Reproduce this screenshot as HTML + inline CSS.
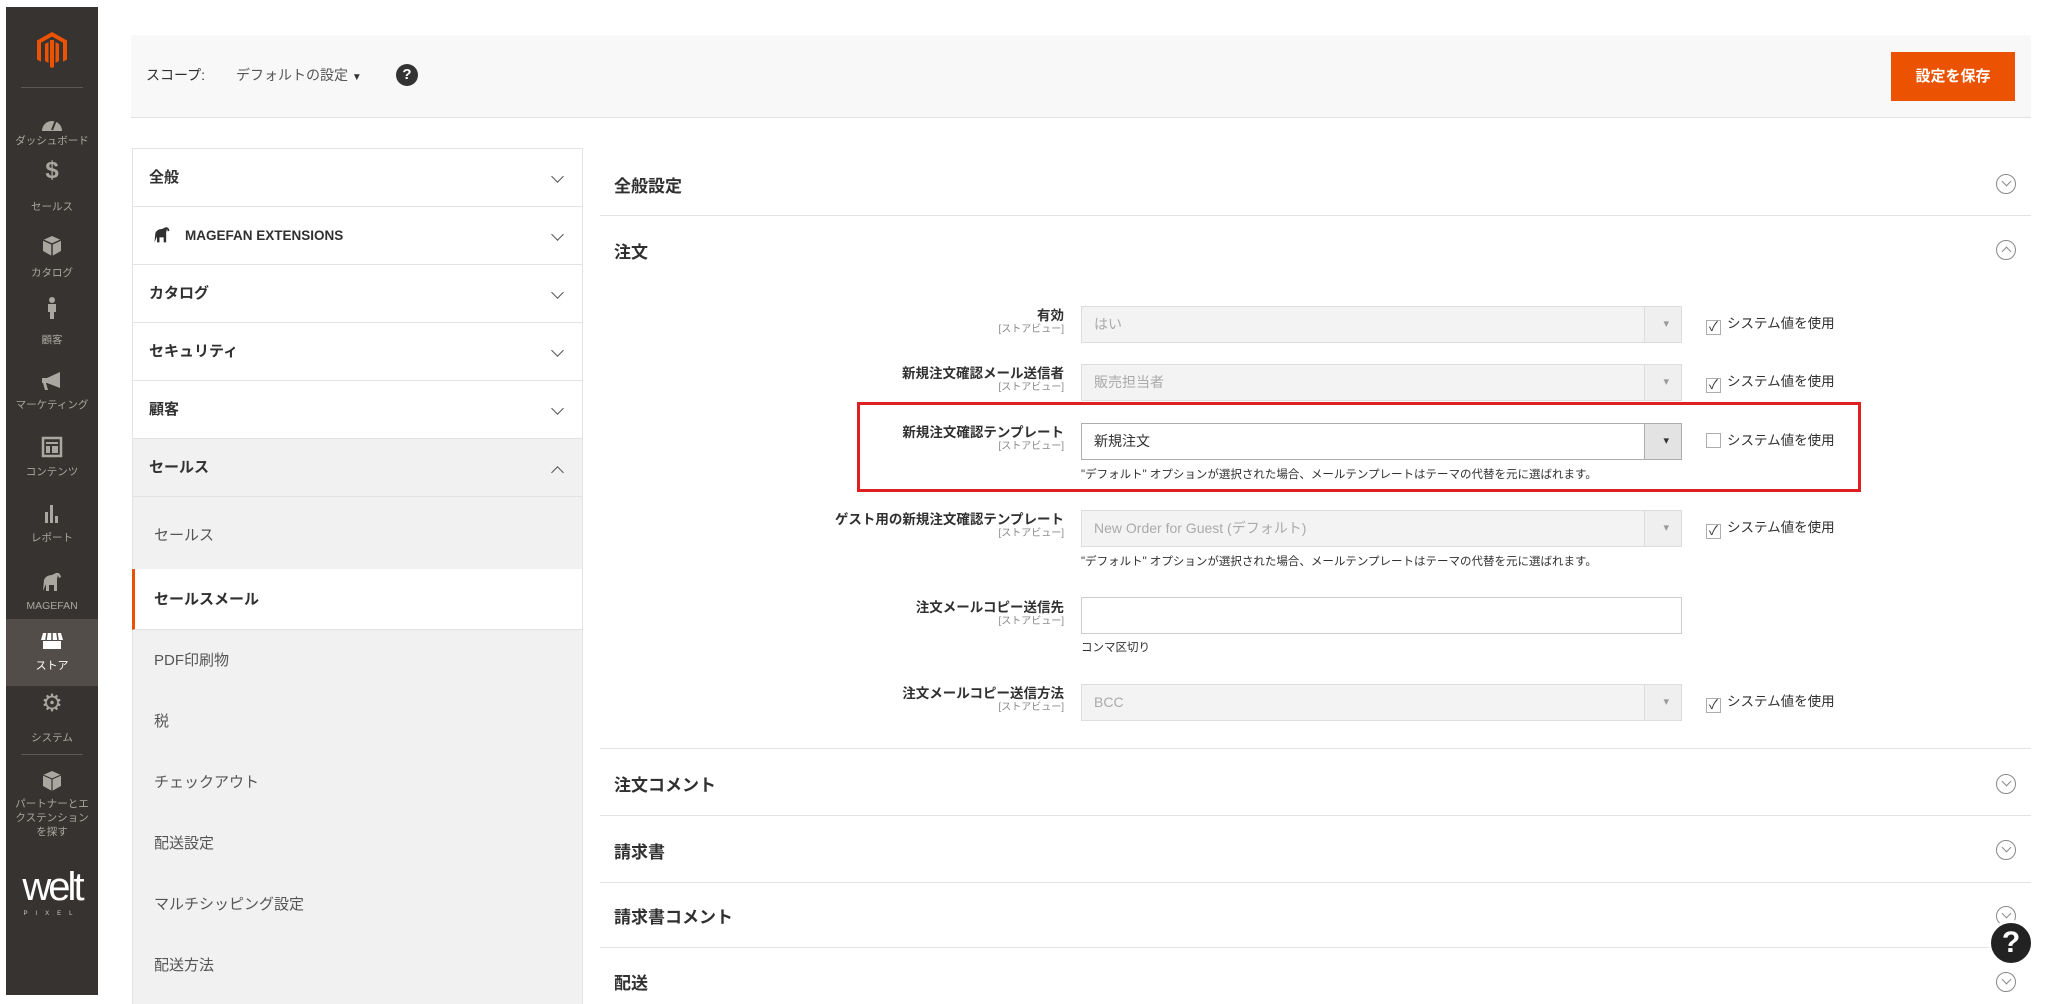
<!DOCTYPE html>
<html><head><meta charset="utf-8"><style>
*{margin:0;padding:0;box-sizing:border-box}
body{width:2048px;height:1004px;background:#fff;position:relative;overflow:hidden;font-family:"Liberation Sans","Noto Sans CJK JP",sans-serif;color:#303030}
.a{position:absolute}
#sb{left:6px;top:7px;width:92px;height:988px;background:#373330}
.si{position:absolute;left:0;width:92px;text-align:center;color:#aaa6a0;font-size:10.5px;line-height:14px}
.ic{position:absolute;left:34px;width:24px;height:24px}
.hdr{left:131px;top:35px;width:1900px;height:83px;background:#f8f8f8;border-bottom:1px solid #e3e3e3}
.row{position:absolute;left:132px;width:451px;height:58px;border:1px solid #e3e3e3;border-top:none;font-size:15px;font-weight:bold;padding-left:16px;line-height:57px;background:#fff}
.chev{position:absolute;right:20px;top:23px;width:9px;height:9px;border-right:1.5px solid #555;border-bottom:1.5px solid #555;transform:rotate(45deg)}
.sub{position:absolute;left:132px;width:451px;height:61px;background:#f1f1f1;border-right:1px solid #e3e3e3;border-left:1px solid #e3e3e3;font-size:15px;color:#555;padding-left:21px;line-height:61px}
.sec{position:absolute;left:614px;font-size:17px;font-weight:bold;color:#303030}
.line{position:absolute;left:600px;width:1431px;height:1px;background:#e3e3e3}
.circ{position:absolute;left:1996px;width:20px;height:20px;border:1.5px solid #888;border-radius:50%}
.circ:after{content:"";position:absolute;left:5.5px;top:3px;width:6px;height:6px;border-right:1.5px solid #888;border-bottom:1.5px solid #888;transform:rotate(45deg)}
.circ.up:after{top:7px;transform:rotate(-135deg)}
.lbl{position:absolute;right:984px;text-align:right;font-size:13.5px;font-weight:bold;line-height:16px}
.lbl small{display:block;font-weight:normal;font-size:10px;color:#888;line-height:12px}
.sel{position:absolute;left:1081px;width:601px;height:37px;border:1px solid #ddd;background:#f3f3f3;color:#aaa;font-size:14px;line-height:35px;padding-left:12px}
.sel:after{content:"";position:absolute;right:0;top:0;width:36px;height:35px;border-left:1px solid #ddd;background:#efefef}
.sel:before{content:"▾";position:absolute;right:12px;top:0;font-size:11px;color:#999;z-index:1}
.sel.on{background:#fff;border-color:#adadad;color:#303030}
.sel.on:after{background:#e3e3e3;border-color:#adadad}
.sel.on:before{color:#333}
.inp{position:absolute;left:1081px;width:601px;height:37px;border:1px solid #ccc;background:#fff}
.cb{position:absolute;left:1706px;font-size:13.5px;color:#303030;line-height:16px}
.cb i{display:inline-block;width:15px;height:15px;border:1px solid #adadad;vertical-align:-3px;margin-right:6px;font-style:normal;font-size:13px;line-height:12px;text-align:center}
.note{position:absolute;left:1081px;font-size:11.5px;color:#303030}
</style></head><body>
<div id="sb" class="a">
 <svg class="a" style="left:30px;top:24px" width="32" height="38" viewBox="0 0 32 38"><path d="M16 1 L31 9.5 V28.5 L27 30.8 V11.8 L16 5.5 L5 11.8 V30.8 L1 28.5 V9.5 Z M14 9 L18 9 L18 36 L16 37 L14 36 Z M9 13 L12.5 11 V32 L9 30 Z M19.5 11 L23 13 V30 L19.5 32 Z" fill="#eb5202"/></svg>
 <div class="a" style="left:15px;top:80px;width:62px;height:1px;background:#5c5853"></div>
 <svg class="ic" style="top:104px" viewBox="0 0 24 24"><path d="M2 20 A10 10 0 0 1 22 20 Z" fill="#aaa6a0"/><path d="M12 19 L16 9" stroke="#373330" stroke-width="2"/></svg>
 <div class="si" style="top:127px">ダッシュボード</div>
 <div class="si" style="top:157px;font-size:24px;font-weight:bold">$</div><div class="si" style="top:193px">セールス</div>
 <svg class="ic" style="top:227px" viewBox="0 0 24 24"><path d="M12 2 L21 6 V17 L12 22 L3 17 V6 Z" fill="#aaa6a0"/><path d="M3 6 L12 10 L21 6 M12 10 V22" stroke="#373330" stroke-width="1.5" fill="none"/></svg>
 <div class="si" style="top:259px">カタログ</div>
 <svg class="ic" style="top:289px" viewBox="0 0 24 24"><circle cx="12" cy="4" r="3" fill="#aaa6a0"/><path d="M8 8 H16 V16 H14 V23 H10 V16 H8 Z" fill="#aaa6a0"/></svg>
 <div class="si" style="top:326px">顧客</div>
 <svg class="ic" style="top:362px" viewBox="0 0 24 24"><path d="M2 9 H7 L20 3 V19 L7 14 H6 L8 21 H5 L3 14 H2 Z" fill="#aaa6a0"/></svg>
 <div class="si" style="top:391px">マーケティング</div>
 <svg class="ic" style="top:428px" viewBox="0 0 24 24"><rect x="3" y="3" width="18" height="18" fill="none" stroke="#aaa6a0" stroke-width="2.5"/><rect x="6" y="7" width="12" height="2" fill="#aaa6a0"/><rect x="6" y="11" width="4" height="7" fill="#aaa6a0"/><rect x="12" y="11" width="6" height="7" fill="#aaa6a0"/></svg>
 <div class="si" style="top:458px">コンテンツ</div>
 <svg class="ic" style="top:495px" viewBox="0 0 24 24"><rect x="5" y="10" width="3" height="11" fill="#aaa6a0"/><rect x="10" y="3" width="3" height="18" fill="#aaa6a0"/><rect x="15" y="14" width="3" height="7" fill="#aaa6a0"/></svg>
 <div class="si" style="top:524px">レポート</div>
 <svg class="ic" style="top:562px" viewBox="0 0 24 24"><path d="M3 22 L4 11 Q6 6 12 6 L16 4 Q20 3 21 8 L19 9 L18 6 L17 10 L17 22 H14 V16 H9 V22 H6 V15 Z" fill="#aaa6a0"/></svg>
 <div class="si" style="top:592px">MAGEFAN</div>
 <div class="a" style="left:0;top:612px;width:92px;height:67px;background:#524d49"></div>
 <svg class="ic" style="top:622px" viewBox="0 0 24 24"><path d="M3 4 H21 L23 11 H1 Z" fill="#fff"/><path d="M3 12 H21 V20 H3 Z" fill="#fff"/><path d="M7 4 L6 11 M12 4 V11 M17 4 L18 11" stroke="#524d49" stroke-width="1.5"/></svg>
 <div class="si" style="top:652px;color:#fff;font-size:11px">ストア</div>
 <div class="si" style="top:690px;font-size:24px">⚙</div><div class="si" style="top:724px">システム</div>
 <div class="a" style="left:15px;top:747px;width:62px;height:1px;background:#5c5853"></div>
 <svg class="ic" style="top:762px" viewBox="0 0 24 24"><path d="M12 2 L21 6 V17 L12 22 L3 17 V6 Z" fill="#aaa6a0"/><path d="M3 6 L12 10 L21 6 M12 10 V22" stroke="#373330" stroke-width="1.2" fill="none"/></svg>
 <div class="si" style="top:790px">パートナーとエ<br>クステンション<br>を探す</div>
 <div class="si" style="top:858px;font-size:40px;color:#fff;letter-spacing:-3px;line-height:44px">welt</div>
 <div class="si" style="top:900px;font-size:6px;color:#ccc;letter-spacing:8px">PIXEL</div>
</div>

<div class="a hdr"></div>
<div class="a" style="left:146px;top:65px;font-size:14px">スコープ:</div>
<div class="a" style="left:236px;top:65px;font-size:14px;color:#555">デフォルトの設定 <span style="font-size:10px;color:#333">▼</span></div>
<div class="a" style="left:396px;top:64px;width:22px;height:22px;border-radius:50%;background:#333;color:#fff;font-size:15px;font-weight:bold;text-align:center;line-height:22px">?</div>
<div class="a" style="left:1891px;top:52px;width:124px;height:49px;background:#eb5202;color:#fff;font-size:15px;font-weight:bold;text-align:center;line-height:49px">設定を保存</div>

<div class="a" style="left:132px;top:148px;width:451px;height:1px;background:#e3e3e3"></div>
<div class="row" style="top:149px">全般<span class="chev"></span></div>
<div class="row" style="top:207px;padding-left:16px"><svg style="vertical-align:-4px" width="26" height="20" viewBox="0 0 24 24"><path d="M3 22 L4 11 Q6 6 12 6 L16 4 Q20 3 21 8 L19 9 L18 6 L17 10 L17 22 H14 V16 H9 V22 H6 V15 Z" fill="#303030"/></svg><span style="font-size:13.5px;margin-left:10px">MAGEFAN EXTENSIONS</span><span class="chev"></span></div>
<div class="row" style="top:265px">カタログ<span class="chev"></span></div>
<div class="row" style="top:323px">セキュリティ<span class="chev"></span></div>
<div class="row" style="top:381px">顧客<span class="chev"></span></div>
<div class="row" style="top:439px;background:#f1f1f1">セールス<span class="chev" style="transform:rotate(-135deg);top:29px"></span></div>
<div class="sub" style="top:497px;height:72px;line-height:78px">セールス</div>
<div class="sub" style="top:569px;background:#fff;color:#303030;font-weight:bold;border-left:3px solid #eb5202;border-bottom:1px solid #e3e3e3;padding-left:19px">セールスメール</div>
<div class="sub" style="top:630px">PDF印刷物</div>
<div class="sub" style="top:691px">税</div>
<div class="sub" style="top:752px">チェックアウト</div>
<div class="sub" style="top:813px">配送設定</div>
<div class="sub" style="top:874px">マルチシッピング設定</div>
<div class="sub" style="top:935px;height:69px">配送方法</div>

<div class="sec" style="top:172px">全般設定</div><div class="circ" style="top:174px"></div>
<div class="line" style="top:215px"></div>
<div class="sec" style="top:238px">注文</div><div class="circ up" style="top:240px"></div>

<div class="lbl" style="top:308px">有効<small>[ストアビュー]</small></div>
<div class="sel" style="top:306px">はい</div>
<div class="cb" style="top:316px"><i>✓</i>システム値を使用</div>

<div class="lbl" style="top:366px">新規注文確認メール送信者<small>[ストアビュー]</small></div>
<div class="sel" style="top:364px">販売担当者</div>
<div class="cb" style="top:374px"><i>✓</i>システム値を使用</div>

<div class="a" style="left:857px;top:402px;width:1004px;height:90px;border:3px solid #e02020"></div>
<div class="lbl" style="top:425px">新規注文確認テンプレート<small>[ストアビュー]</small></div>
<div class="sel on" style="top:423px">新規注文</div>
<div class="cb" style="top:433px"><i></i>システム値を使用</div>
<div class="note" style="top:466px">"デフォルト" オプションが選択された場合、メールテンプレートはテーマの代替を元に選ばれます。</div>

<div class="lbl" style="top:512px">ゲスト用の新規注文確認テンプレート<small>[ストアビュー]</small></div>
<div class="sel" style="top:510px">New Order for Guest (デフォルト)</div>
<div class="cb" style="top:520px"><i>✓</i>システム値を使用</div>
<div class="note" style="top:553px">"デフォルト" オプションが選択された場合、メールテンプレートはテーマの代替を元に選ばれます。</div>

<div class="lbl" style="top:600px">注文メールコピー送信先<small>[ストアビュー]</small></div>
<div class="inp" style="top:597px"></div>
<div class="note" style="top:639px">コンマ区切り</div>

<div class="lbl" style="top:686px">注文メールコピー送信方法<small>[ストアビュー]</small></div>
<div class="sel" style="top:684px">BCC</div>
<div class="cb" style="top:694px"><i>✓</i>システム値を使用</div>

<div class="line" style="top:748px"></div>
<div class="sec" style="top:771px">注文コメント</div><div class="circ" style="top:774px"></div>
<div class="line" style="top:815px"></div>
<div class="sec" style="top:838px">請求書</div><div class="circ" style="top:840px"></div>
<div class="line" style="top:882px"></div>
<div class="sec" style="top:903px">請求書コメント</div><div class="circ" style="top:906px"></div>
<div class="line" style="top:947px"></div>
<div class="sec" style="top:969px">配送</div><div class="circ" style="top:972px"></div>
<div class="a" style="left:1988px;top:920px;width:46px;height:46px;border-radius:50%;background:#222;border:3px solid #fff;color:#fff;font-size:30px;font-weight:bold;text-align:center;line-height:40px">?</div>
</body></html>
